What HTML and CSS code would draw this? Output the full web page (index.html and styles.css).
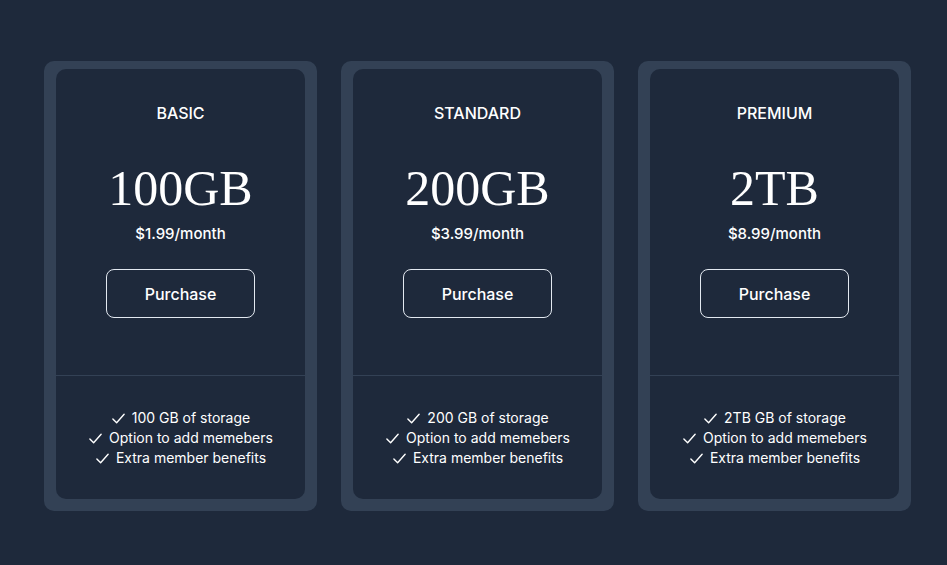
FILE: index.html
```html
<!DOCTYPE html>
<html>
<head>
<meta charset="utf-8">
<link rel="stylesheet" href="styles.css">
</head>
<body>
<div class="plans">
  <div class="plan">
    <div class="plan-inner">
      <div class="plan-top">
        <div class="plan-name">BASIC</div>
        <div class="plan-size">100GB</div>
        <div class="plan-price">$1.99/month</div>
        <button class="plan-btn">Purchase</button>
      </div>
      <ul class="plan-features">
        <li><svg class="check" viewBox="0 0 16 16"><path d="M2 8.5l4 4 8-9"/></svg>100 GB of storage</li>
        <li><svg class="check" viewBox="0 0 16 16"><path d="M2 8.5l4 4 8-9"/></svg>Option to add memebers</li>
        <li><svg class="check" viewBox="0 0 16 16"><path d="M2 8.5l4 4 8-9"/></svg>Extra member benefits</li>
      </ul>
    </div>
  </div>
  <div class="plan">
    <div class="plan-inner">
      <div class="plan-top">
        <div class="plan-name">STANDARD</div>
        <div class="plan-size">200GB</div>
        <div class="plan-price">$3.99/month</div>
        <button class="plan-btn">Purchase</button>
      </div>
      <ul class="plan-features">
        <li><svg class="check" viewBox="0 0 16 16"><path d="M2 8.5l4 4 8-9"/></svg>200 GB of storage</li>
        <li><svg class="check" viewBox="0 0 16 16"><path d="M2 8.5l4 4 8-9"/></svg>Option to add memebers</li>
        <li><svg class="check" viewBox="0 0 16 16"><path d="M2 8.5l4 4 8-9"/></svg>Extra member benefits</li>
      </ul>
    </div>
  </div>
  <div class="plan">
    <div class="plan-inner">
      <div class="plan-top">
        <div class="plan-name">PREMIUM</div>
        <div class="plan-size">2TB</div>
        <div class="plan-price">$8.99/month</div>
        <button class="plan-btn">Purchase</button>
      </div>
      <ul class="plan-features">
        <li><svg class="check" viewBox="0 0 16 16"><path d="M2 8.5l4 4 8-9"/></svg>2TB GB of storage</li>
        <li><svg class="check" viewBox="0 0 16 16"><path d="M2 8.5l4 4 8-9"/></svg>Option to add memebers</li>
        <li><svg class="check" viewBox="0 0 16 16"><path d="M2 8.5l4 4 8-9"/></svg>Extra member benefits</li>
      </ul>
    </div>
  </div>
</div>
</body>
</html>
```
FILE: styles.css
```css
* { box-sizing: border-box; }
html, body {
  margin: 0;
  background: #1e293b;
  font-family: Inter, "Liberation Sans", sans-serif;
  color: #ffffff;
}
.plans {
  display: flex;
  gap: 24px;
  padding: 61px 0 0 44px;
}
.plan {
  width: 273px;
  background: #334155;
  border-radius: 10px;
  padding: 8px 12px 12px;
}
.plan-inner {
  background: #1e293b;
  border-radius: 10px;
}
.plan-top {
  display: flex;
  flex-direction: column;
  align-items: center;
  padding: 32px 0 57px;
  border-bottom: 1px solid #334155;
}
.plan-name {
  font-size: 16px;
  line-height: 24px;
  font-weight: 500;
}
.plan-size {
  margin-top: 35px;
  font-family: "Liberation Serif", serif;
  font-size: 50px;
  line-height: 56px;
}
.plan-price {
  margin-top: 8px;
  font-size: 15px;
  line-height: 20px;
  font-weight: 500;
}
.plan-btn {
  margin-top: 25px;
  width: 149px;
  height: 49px;
  background: transparent;
  border: 1px solid #e2e8f0;
  border-radius: 8px;
  color: #ffffff;
  font-family: inherit;
  font-size: 16px;
  font-weight: 500;
}
.plan-features {
  list-style: none;
  margin: 0;
  padding: 32px 0 31px;
  text-align: center;
  font-size: 14px;
  line-height: 20px;
  font-weight: 400;
}
.plan-features li {
  display: flex;
  justify-content: center;
  align-items: center;
  gap: 6px;
}
.check {
  width: 15px;
  height: 15px;
  fill: none;
  stroke: #ffffff;
  stroke-width: 1.5;
  stroke-linecap: round;
  stroke-linejoin: round;
}
```
